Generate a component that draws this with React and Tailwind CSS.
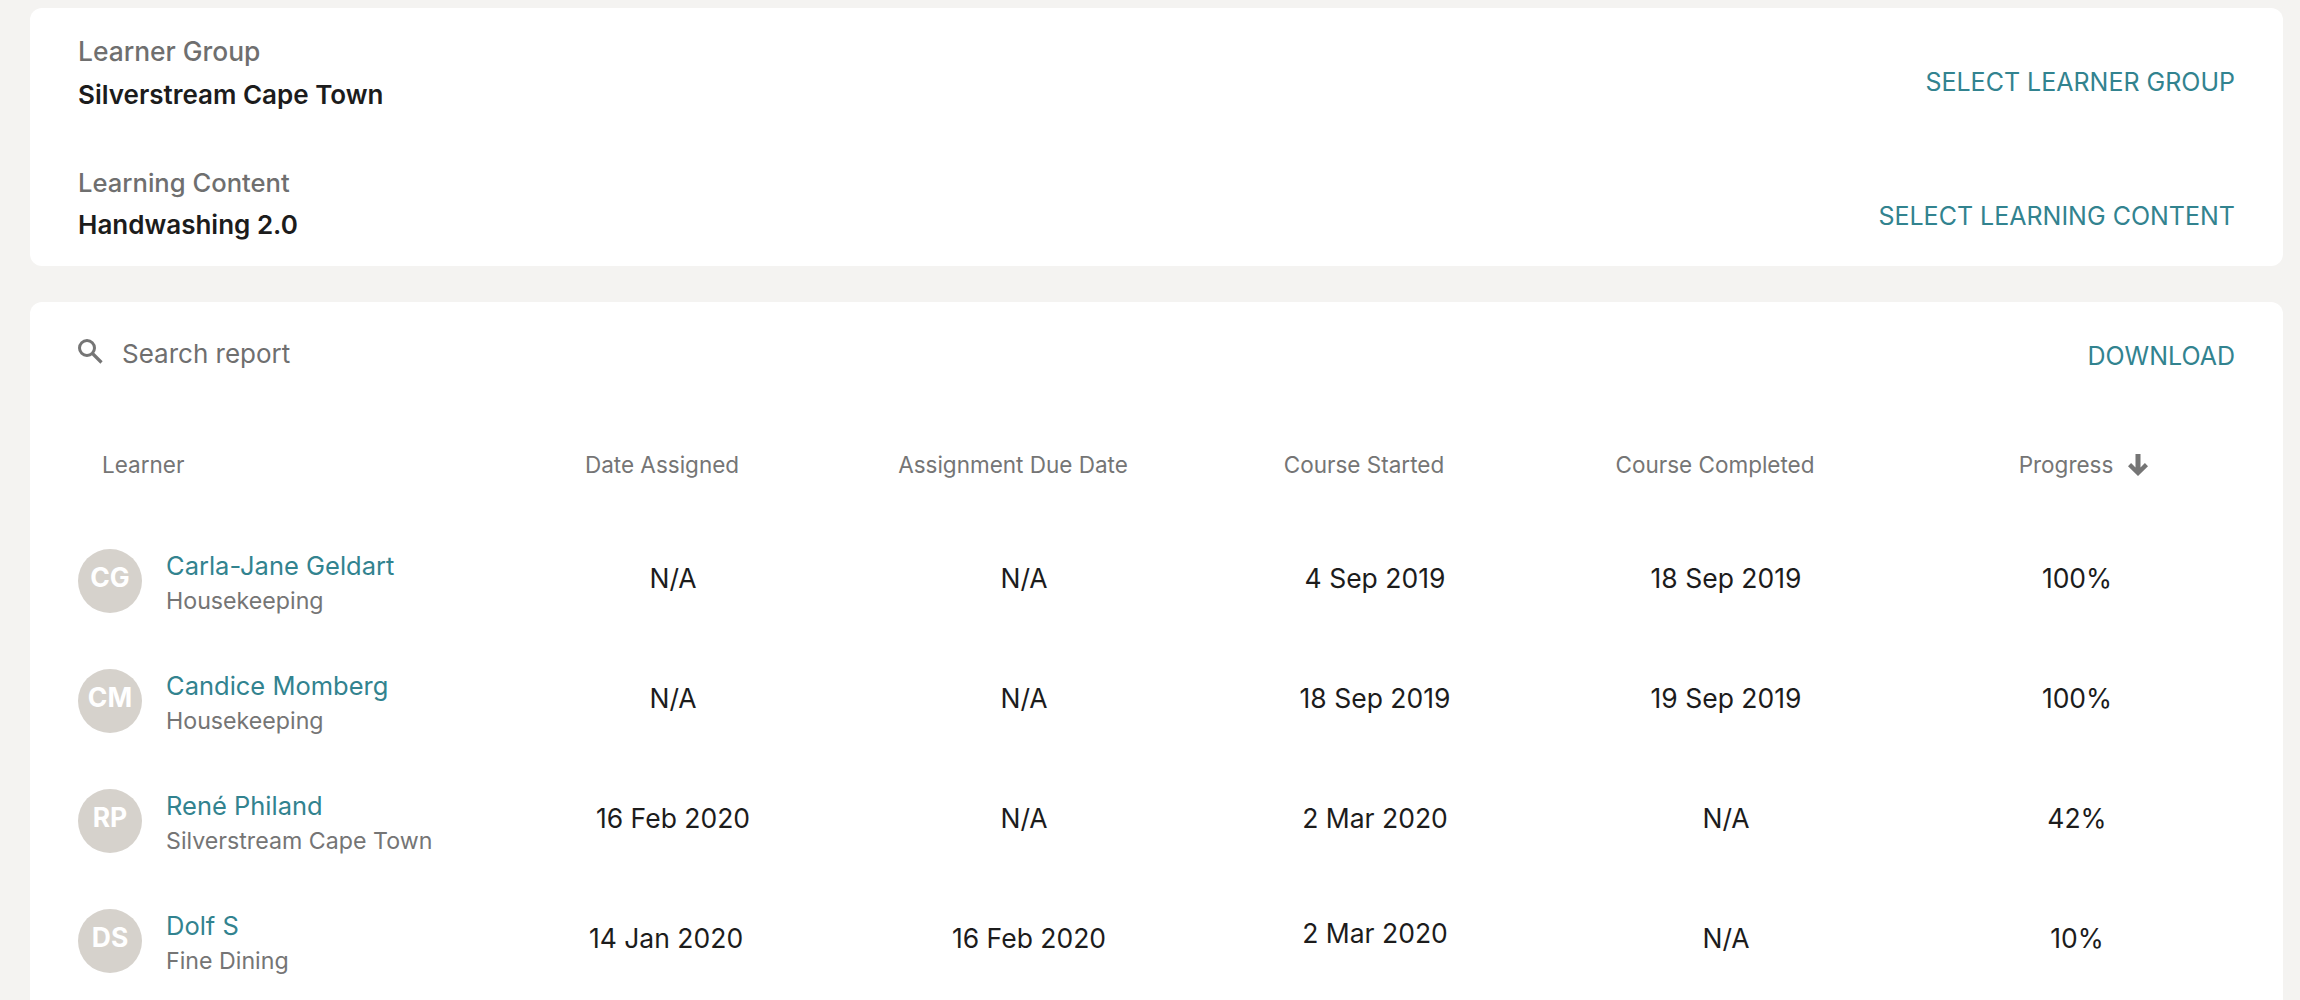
const rows = [
  { i: 'CG', n: 'Carla-Jane Geldart', s: 'Housekeeping', c: [['N/A'], ['N/A'], ['4 Sep 2019'], ['18 Sep 2019'], ['100%']] },
  { i: 'CM', n: 'Candice Momberg', s: 'Housekeeping', c: [['N/A'], ['N/A'], ['18 Sep 2019'], ['19 Sep 2019'], ['100%']] },
  { i: 'RP', n: 'René Philand', s: 'Silverstream Cape Town', c: [['16 Feb 2020'], ['N/A'], ['2 Mar 2020'], ['N/A'], ['42%']] },
  { i: 'DS', n: 'Dolf S', s: 'Fine Dining', c: [['14 Jan 2020', 'pr-[14px]'], ['16 Feb 2020', 'pl-[10px]'], ['2 Mar 2020', 'pb-[14px]'], ['N/A'], ['10%']] },
];
const heads = ['Date Assigned', 'Assignment Due Date', 'Course Started', 'Course Completed'];
const grid = 'grid grid-cols-[419.5px_351px_351px_351px_351px_351px]';

export default function App() {
  return (
    <div className="h-[1000px] overflow-hidden bg-[#f4f3f1] pl-[30px] pr-[17px] pt-[8px] font-['Inter','Liberation_Sans',sans-serif]">
      <section className="h-[258px] rounded-[12px] bg-white px-[48px] pt-[27px]">
        <div className="flex h-[132px] items-start justify-between">
          <div>
            <div className="text-[26.4px] leading-[32px] font-medium text-[#6f6f6f]">Learner Group</div>
            <div className="mt-[12px] text-[26px] leading-[32px] font-semibold text-[#1c1c1c]">Silverstream Cape Town</div>
          </div>
          <button className="mt-[31px] text-[25px] leading-[32px] text-[#32838f]">SELECT LEARNER GROUP</button>
        </div>
        <div className="flex items-start justify-between">
          <div>
            <div className="text-[25.6px] leading-[32px] font-medium text-[#6f6f6f]">Learning Content</div>
            <div className="mt-[10px] text-[26px] leading-[32px] font-semibold text-[#1c1c1c]">Handwashing 2.0</div>
          </div>
          <button className="mt-[33px] text-[25px] leading-[32px] text-[#32838f]">SELECT LEARNING CONTENT</button>
        </div>
      </section>
      <section className="mt-[36px] h-[800px] rounded-[12px] bg-white pl-[48px] pr-[48px] pt-[32px]">
        <div className="flex items-start justify-between">
          <div className="flex h-[32px] items-center gap-[19px] text-[#6f6f6f]">
            <svg width="25" height="25" viewBox="0 0 25 25" fill="none" stroke="#757575" strokeWidth="3" className="translate-y-[1px]">
              <circle cx="9" cy="9" r="7.5" />
              <path d="M14.5 14.5 L23.5 23.5" strokeWidth="3.2" />
            </svg>
            <span className="translate-y-[3px] text-[26px]">Search report</span>
          </div>
          <button className="mt-[6px] text-[25px] leading-[32px] text-[#32838f]">DOWNLOAD</button>
        </div>
        <div className={`${grid} mt-[77px] h-[32px] items-center text-[22.5px] leading-[32px] text-[#757575]`}>
          <div className="pl-[24px]">Learner</div>
          {heads.map((h) => <div key={h} className="pr-[22px] text-center">{h}</div>)}
          <div className="relative pr-[22px] text-center">
            Progress
            <svg width="20" height="22" viewBox="0 0 20 22" fill="#757575" className="absolute left-[226px] top-[5px]">
              <path d="M7.5 0h5v13.5l4.4-4.4 3.1 3.1L10 22 0 12.2l3.1-3.1 4.4 4.4z" />
            </svg>
          </div>
        </div>
        <div className="mt-[63px] flex flex-col gap-[56px]">
          {rows.map((r) => (
            <div key={r.i} className={`${grid} h-[64px] items-center text-[26.5px] text-[#1c1c1c]`}>
              <div className="flex items-center gap-[24px]">
                <div className="flex h-[64px] w-[64px] items-center justify-center rounded-full bg-[#d6d2cc] pb-[7px] text-[26.5px] font-bold text-white">{r.i}</div>
                <div className="pt-[5px]">
                  <div className="text-[25.5px] leading-[34.5px] text-[#32838f]">{r.n}</div>
                  <div className="text-[23.2px] leading-[34.5px] text-[#757575]">{r.s}</div>
                </div>
              </div>
              {r.c.map(([v, cls], k) => <div key={k} className={`pb-[4px] text-center ${cls || ''}`}>{v}</div>)}
            </div>
          ))}
        </div>
      </section>
    </div>
  );
}
